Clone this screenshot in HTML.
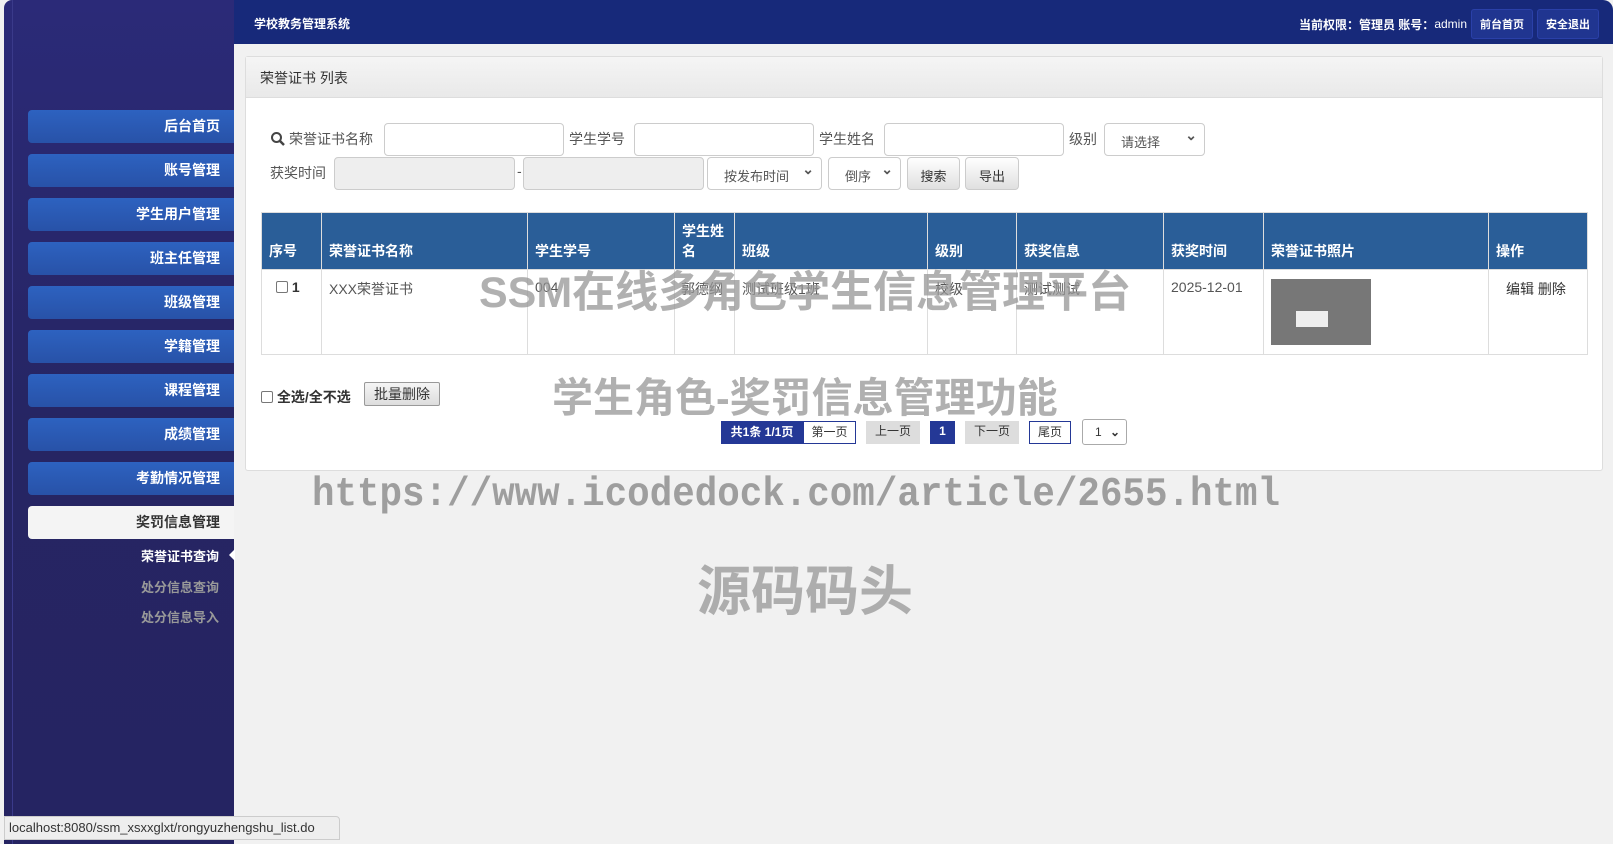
<!DOCTYPE html>
<html><head><meta charset="utf-8"><style>
*{box-sizing:border-box;margin:0;padding:0}
body{width:1613px;height:844px;overflow:hidden;background:#f1f1f1;font-family:"Liberation Sans","Noto Sans CJK SC",sans-serif;font-size:14px;color:#555;position:relative}
.side{position:absolute;left:4px;top:0;width:230px;height:844px;background:linear-gradient(180deg,#2b2a78,#262563 50%,#252462);border-radius:8px 0 0 0}
.side:before{content:"";position:absolute;left:8px;top:0;bottom:0;width:1px;background:#3a3a8a}
.top{position:absolute;left:234px;top:0;width:1379px;height:44px;background:#17297a;color:#fff;border-radius:0 10px 0 0}
.top .t{position:absolute;left:20px;top:15px;font-size:12px;font-weight:bold}
.top .r{position:absolute;right:14px;top:9px;font-size:12px;font-weight:bold;display:flex;align-items:center}
.top .b{display:inline-block;background:#203590;border:1px solid #2a40a8;border-radius:3px;padding:6px 8px;margin-left:4px;font-size:11px}
.m{position:absolute;left:28px;width:206px;height:33px;background:linear-gradient(180deg,#2d62c0,#2852a8);border-radius:4px 0 0 4px;color:#fff;font-weight:bold;font-size:14px;text-align:right;padding-right:14px;line-height:33px}
.m.act{background:#f4f4f4;color:#333}
.sub{position:absolute;left:28px;width:191px;text-align:right;font-size:13px;font-weight:bold;color:#999}
.panel{position:absolute;left:245px;top:56px;width:1358px;height:415px;background:#fff;border:1px solid #ddd;border-radius:3px}
.ph{height:41px;background:linear-gradient(#f5f5f5,#e9e9e9);border-bottom:1px solid #ddd;padding:11px 14px;font-size:14px;color:#333}
.a{position:absolute}
.in{position:absolute;height:33px;border:1px solid #ccc;border-radius:4px;background:#fff}
.in.g{background:#eee}
.sel{position:absolute;height:33px;border:1px solid #ccc;border-radius:4px;background:#fff;font-size:13px;color:#555;padding:8px 0 0 16px}
.sel:after{content:"⌄";position:absolute;right:7px;top:3px;font-size:14px;font-weight:bold}
.btn{position:absolute;height:33px;border:1px solid #ccc;border-radius:4px;background:linear-gradient(#fff,#e0e0e0);font-size:13px;color:#333;text-align:center;padding-top:8px}
table{position:absolute;left:15px;top:155px;width:1327px;border-collapse:collapse}
th{background:#2a5e98;color:#fff;font-weight:bold;text-align:left;vertical-align:bottom;padding:0 7px 8px;height:57px;border:1px solid #ddd;font-size:14px}
td{vertical-align:top;padding:9px 7px;height:82px;border:1px solid #ddd;font-size:14px;color:#555}
.pg{position:absolute;top:364px;height:23px;font-size:12px;text-align:center;line-height:21px;color:#333}
.wm{position:absolute;color:rgba(150,150,150,.75);font-weight:bold;white-space:nowrap}
</style></head><body>
<div class="side"></div>
<div class="top"><div class="t">学校教务管理系统</div><div class="r">当前权限：管理员 账号：<span style="font-weight:normal">admin</span><span class="b">前台首页</span><span class="b">安全退出</span></div></div>
<div class="m" style="top:110px">后台首页</div>
<div class="m" style="top:154px">账号管理</div>
<div class="m" style="top:198px">学生用户管理</div>
<div class="m" style="top:242px">班主任管理</div>
<div class="m" style="top:286px">班级管理</div>
<div class="m" style="top:330px">学籍管理</div>
<div class="m" style="top:374px">课程管理</div>
<div class="m" style="top:418px">成绩管理</div>
<div class="m" style="top:462px">考勤情况管理</div>
<div class="m act" style="top:506px">奖罚信息管理</div>
<div class="sub" style="top:546px;color:#fff">荣誉证书查询</div>
<div style="position:absolute;left:229px;top:549px;width:0;height:0;border:6px solid transparent;border-right-color:#fff;border-left:0"></div>
<div class="sub" style="top:577px">处分信息查询</div>
<div class="sub" style="top:607px">处分信息导入</div>
<div class="panel">
<div class="ph">荣誉证书 列表</div>
<svg class="a" style="left:24px;top:74px" width="16" height="16" viewBox="0 0 16 16"><circle cx="6.5" cy="6.5" r="4.5" fill="none" stroke="#444" stroke-width="2"/><path d="M10 10l4 4" stroke="#444" stroke-width="2.5"/></svg>
<div class="a" style="left:43px;top:72px">荣誉证书名称</div>
<div class="in" style="left:138px;top:66px;width:180px"></div>
<div class="a" style="left:323px;top:72px">学生学号</div>
<div class="in" style="left:388px;top:66px;width:180px"></div>
<div class="a" style="left:573px;top:72px">学生姓名</div>
<div class="in" style="left:638px;top:66px;width:180px"></div>
<div class="a" style="left:823px;top:72px">级别</div>
<div class="sel" style="left:858px;top:66px;width:101px">请选择</div>
<div class="a" style="left:24px;top:106px">获奖时间</div>
<div class="in g" style="left:88px;top:100px;width:181px"></div>
<div class="a" style="left:271px;top:106px">-</div>
<div class="in g" style="left:277px;top:100px;width:181px"></div>
<div class="sel" style="left:461px;top:100px;width:115px">按发布时间</div>
<div class="sel" style="left:582px;top:100px;width:73px">倒序</div>
<div class="btn" style="left:661px;top:100px;width:53px">搜索</div>
<div class="btn" style="left:719px;top:100px;width:54px">导出</div>
<table><tr><th style="width:60px">序号</th><th style="width:206px">荣誉证书名称</th><th style="width:147px">学生学号</th><th style="width:60px">学生姓<br>名</th><th style="width:193px">班级</th><th style="width:89px">级别</th><th style="width:147px">获奖信息</th><th style="width:100px">获奖时间</th><th style="width:225px">荣誉证书照片</th><th>操作</th></tr>
<tr><td style="padding-left:14px"><span style="display:inline-block;width:12px;height:12px;border:1px solid #777;border-radius:2px;vertical-align:-1px"></span> <b style="color:#333">1</b></td><td>XXX荣誉证书</td><td>004</td><td style="padding-left:6px">郭德纲</td><td>测试班级1班</td><td>校级</td><td>测试测试</td><td>2025-12-01</td><td><div style="width:100px;height:66px;background:#777;position:relative"><div style="position:absolute;left:25px;top:32px;width:32px;height:16px;background:#eee"></div></div></td><td style="padding-left:17px;color:#333">编辑 删除</td></tr></table>
<div class="a" style="left:15px;top:330px;color:#333;font-weight:bold"><span style="display:inline-block;width:12px;height:12px;border:1px solid #777;border-radius:2px;vertical-align:-1px"></span> 全选/全不选</div>
<div class="a" style="left:118px;top:325px;width:76px;height:24px;border:1px solid #999;border-radius:2px;background:linear-gradient(#f5f5f5,#ddd);text-align:center;line-height:22px;color:#333">批量删除</div>
<div class="pg" style="left:475px;width:82px;background:#243896;color:#fff;font-weight:bold;border:1px solid #243896">共1条 1/1页</div>
<div class="pg" style="left:557px;width:53px;border:1px solid #243896">第一页</div>
<div class="pg" style="left:620px;width:54px;background:#ddd">上一页</div>
<div class="pg" style="left:684px;width:25px;background:#243896;color:#fff;font-weight:bold">1</div>
<div class="pg" style="left:719px;width:54px;background:#ddd">下一页</div>
<div class="pg" style="left:783px;width:42px;border:1px solid #243896">尾页</div>
<div class="pg" style="left:836px;top:362px;width:45px;height:26px;border:1px solid #aaa;border-radius:3px;text-align:left;padding-left:12px;line-height:24px">1 <span style="position:absolute;right:6px;font-weight:bold">⌄</span></div>
</div>
<div class="wm" style="left:479px;top:258px;font-size:43px">SSM在线多角色学生信息管理平台</div>
<div class="wm" style="left:552px;top:364px;font-size:41px">学生角色-奖罚信息管理功能</div>
<div class="wm" style="left:312px;top:472px;font-size:41px;font-family:'Liberation Mono',monospace;transform:scaleX(0.915);transform-origin:0 0;color:rgba(130,130,130,.75)">https://www.icodedock.com/article/2655.html</div>
<div class="wm" style="left:697px;top:547px;font-size:54px">源码码头</div>
<div class="a" style="left:4px;top:816px;width:336px;height:24px;background:#eee;border:1px solid #ccc;border-radius:0 4px 0 0;font-size:13px;color:#333;padding:3px 4px">localhost:8080/ssm_xsxxglxt/rongyuzhengshu_list.do</div>
</body></html>
